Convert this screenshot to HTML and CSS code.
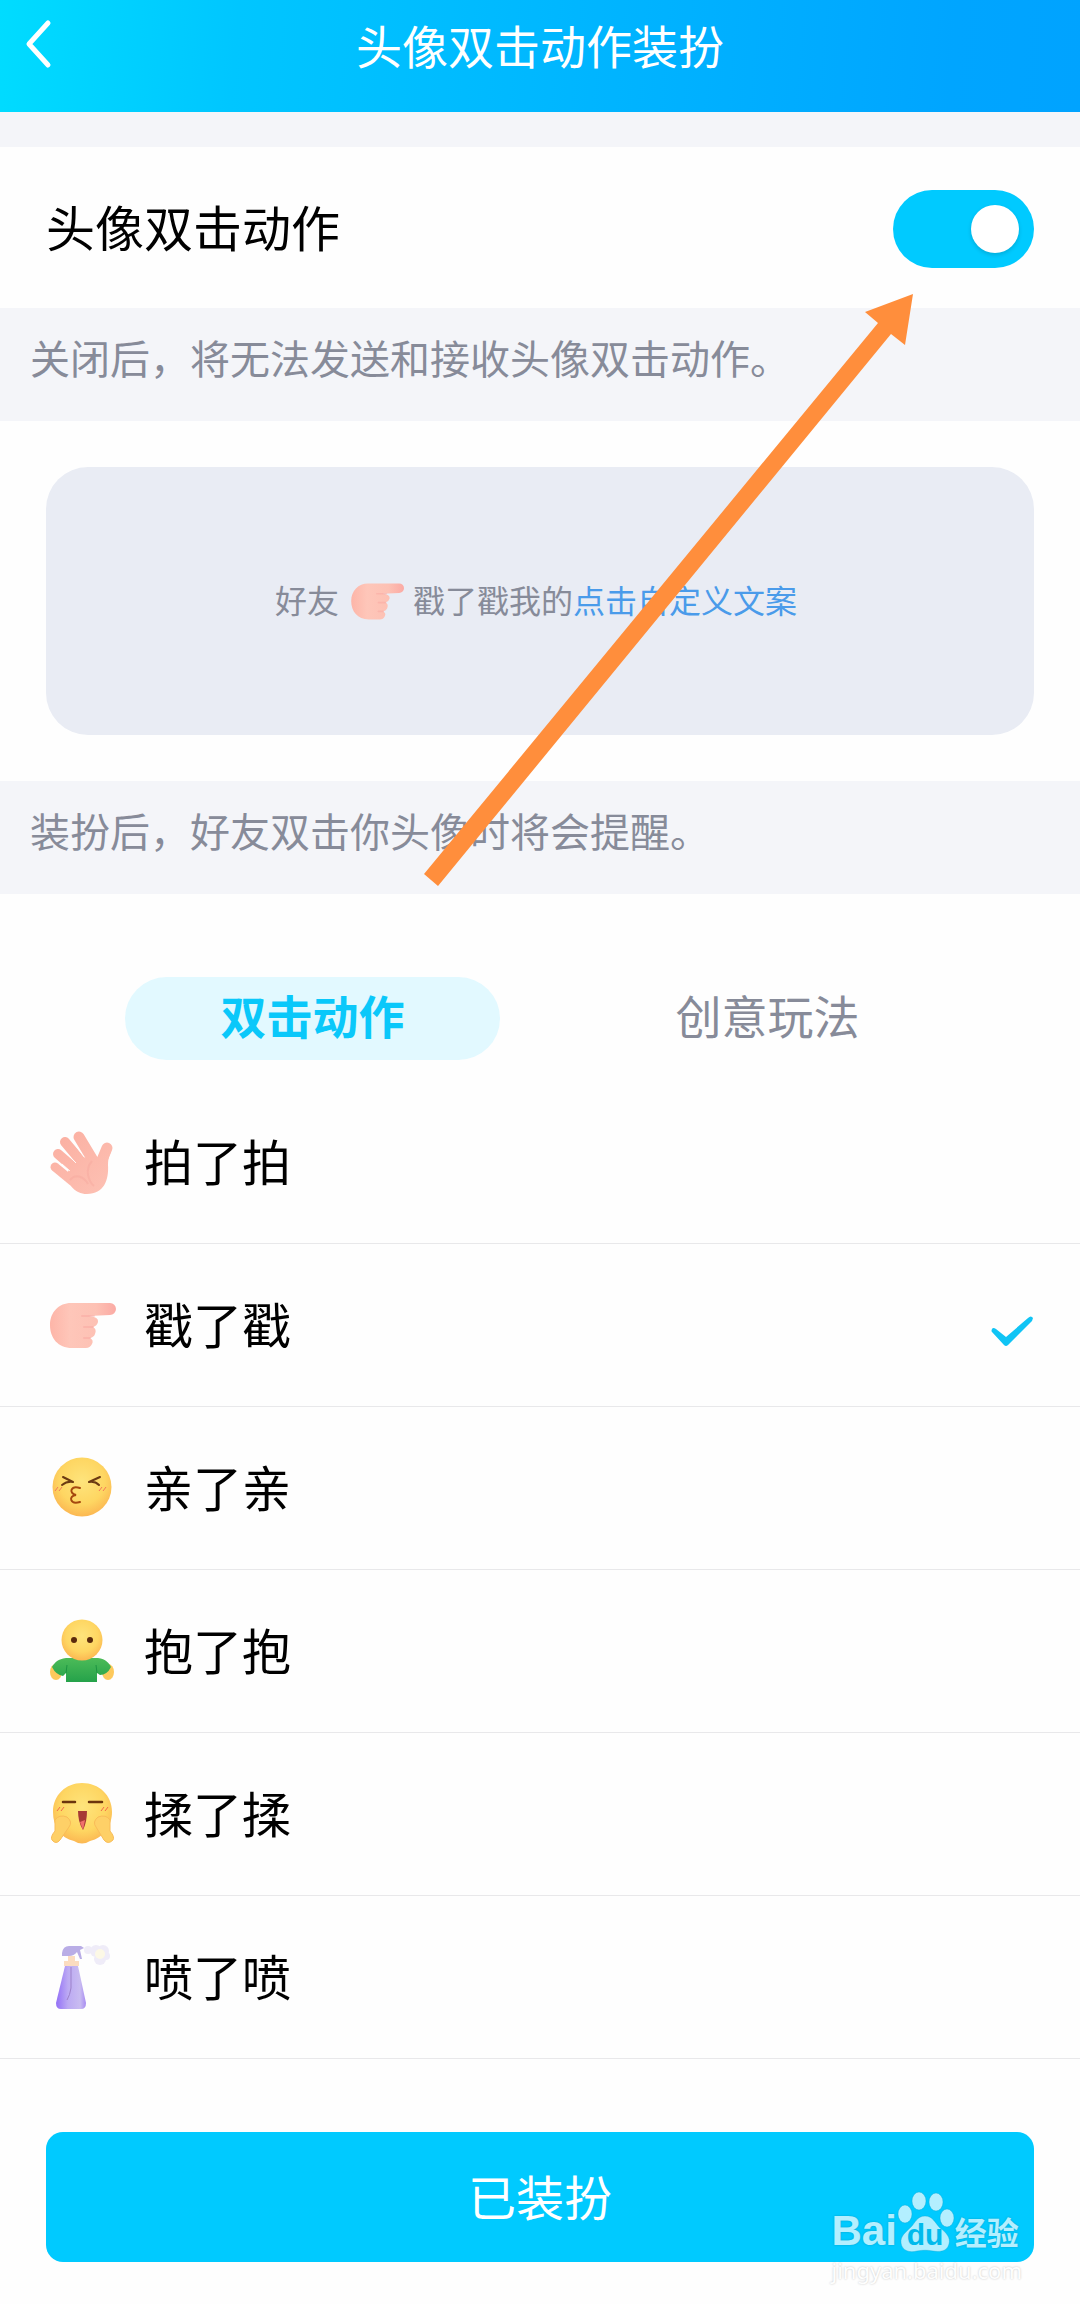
FILE: index.html
```html
<!DOCTYPE html>
<html lang="zh-CN">
<head>
    <meta charset="UTF-8">
    <meta name="viewport" content="width=device-width, initial-scale=1">
    <title>头像双击动作装扮</title>
    <link rel="stylesheet" href="styles.css">
</head>
<body>
    <svg class="defs" width="0" height="0" aria-hidden="true">
        <defs>
            <linearGradient id="skin" gradientUnits="userSpaceOnUse" x1="10" y1="10" x2="60" y2="65">
                <stop offset="0" stop-color="#fbb0a2"/>
                <stop offset="1" stop-color="#fdc0b3"/>
            </linearGradient>
            <linearGradient id="fist" x1="0" y1="0" x2="1" y2="0">
                <stop offset="0" stop-color="#fdb5a8"/>
                <stop offset="0.3" stop-color="#fec6b9"/>
                <stop offset="0.7" stop-color="#fdc1b4"/>
                <stop offset="1" stop-color="#fbaaa4"/>
            </linearGradient>
            <radialGradient id="face" cx="0.5" cy="0.4" r="0.65">
                <stop offset="0" stop-color="#fee47c"/>
                <stop offset="0.6" stop-color="#fed662"/>
                <stop offset="1" stop-color="#fbb04e"/>
            </radialGradient>
            <linearGradient id="shirt" x1="0" y1="0" x2="0" y2="1">
                <stop offset="0" stop-color="#4cbb58"/>
                <stop offset="1" stop-color="#25a24a"/>
            </linearGradient>
            <linearGradient id="bottle" x1="0" y1="0" x2="1" y2="0">
                <stop offset="0" stop-color="#9370f7"/>
                <stop offset="0.4" stop-color="#bcaaf3"/>
                <stop offset="0.8" stop-color="#c9bcf1"/>
                <stop offset="1" stop-color="#a88cf2"/>
            </linearGradient>
            <symbol id="icon-poke" viewBox="0 0 70 70">
                <path d="M25 13H64A6 6 0 0 1 64 25L43 26Q53 27 52 32Q51 36 47 37Q51 39 49 44Q48 47 44 48Q48 50 46 54Q44 58 40 58H26C12 58 4 48 4 35C4 22 13 13 25 13Z" fill="url(#fist)"/>
                <path d="M36 26h12M38 37h9M38 48h6" fill="none" stroke="#f79c98" stroke-width="2" stroke-linecap="round" opacity="0.35"/>
            </symbol>
            <symbol id="icon-check" viewBox="0 0 44 44">
                <path d="M2 26Q3 24 6 26L16 34L38 15Q41 12 43 15L42 18L18 42Q16 44 14 42L2 29Q1 28 2 26Z"/>
            </symbol>
        </defs>
    </svg>

    <div class="page">
        <header class="header">
            <button class="btn-back" aria-label="返回">
                <svg viewBox="0 0 32 56"><path d="M28 7L9 28L28 49" fill="none" stroke="#fff" stroke-width="5" stroke-linecap="round" stroke-linejoin="round"/></svg>
            </button>
            <h1>头像双击动作装扮</h1>
        </header>

        <main>
            <div class="setting">
                <label for="ligado">头像双击动作</label>
                <input type="checkbox" class="switch" id="ligado" checked>
            </div>
            <p class="note">关闭后，将无法发送和接收头像双击动作。</p>

            <div class="preview">
                <div class="card">
                    <span>好友</span>
                    <svg class="icon-small"><use href="#icon-poke"/></svg>
                    <span>戳了戳我的</span><a href="#">点击自定义文案</a>
                </div>
            </div>
            <p class="note">装扮后，好友双击你头像时将会提醒。</p>

            <div class="tabs">
                <button class="tab active">双击动作</button>
                <button class="tab">创意玩法</button>
            </div>

            <div class="actions">
                <label class="action">
                    <svg class="icon" viewBox="0 0 70 70">
                        <g stroke="url(#skin)" stroke-linecap="round" fill="none">
                            <path d="M9 40L26 54" stroke-width="9"/>
                            <path d="M12 27L34 46" stroke-width="10"/>
                            <path d="M19 15L40 40" stroke-width="10"/>
                            <path d="M33 10L48 35" stroke-width="11"/>
                            <path d="M61 21L54 38" stroke-width="11"/>
                        </g>
                        <path d="M21 47C24 38 34 32 43 30L50 33L57 20L65 25C63 29 62 32 62 38C63 53 58 67 41 67C28 67 24 57 19 51Z" fill="url(#skin)"/>
                        <path d="M46 34C38 43 43 55 48 59M24 53C30 46 38 50 42 57" fill="none" stroke="#f6a59a" stroke-width="2" opacity="0.4"/>
                        <path d="M16 37l8 7M20 26l10 10M30 19l8 11" fill="none" stroke="#fff" stroke-width="1" opacity="0.8"/>
                    </svg>
                    <span>拍了拍</span>
                    <input type="radio" name="acao">
                    <svg class="check"><use href="#icon-check"/></svg>
                </label>
                <label class="action">
                    <svg class="icon"><use href="#icon-poke"/></svg>
                    <span>戳了戳</span>
                    <input type="radio" name="acao" checked>
                    <svg class="check"><use href="#icon-check"/></svg>
                </label>
                <label class="action">
                    <svg class="icon" viewBox="0 0 70 70">
                        <circle cx="36" cy="34" r="29.5" fill="url(#face)"/>
                        <path d="M17 24l10 5M27 29q-6-1-11 3M54 24l-11 5M43 29q6-1 10 3" fill="none" stroke="#6b3a12" stroke-width="2" stroke-linecap="round"/>
                        <path d="M34 35C25 32 22 40 30 42C22 43 24 52 34 49" fill="none" stroke="#a5480f" stroke-width="2" stroke-linecap="round"/>
                        <path d="M9 38l3-4M13 38l3-4M53 38l3-4M57 38l3-4" stroke="#f4785a" stroke-width="1"/>
                    </svg>
                    <span>亲了亲</span>
                    <input type="radio" name="acao">
                    <svg class="check"><use href="#icon-check"/></svg>
                </label>
                <label class="action">
                    <svg class="icon" viewBox="0 0 70 70">
                        <ellipse cx="10" cy="56" rx="6" ry="8" fill="#fdc95c"/>
                        <ellipse cx="62" cy="56" rx="6" ry="8" fill="#fdc95c"/>
                        <path d="M20 42H52C60 43 63 47 65 51Q61 59 54 59L51 57V66H20V57L17 60Q10 59 6 51C9 46 12 43 20 42Z" fill="url(#shirt)"/>
                        <path d="M20 57l1-8M51 57l-1-8" stroke="#1d9442" stroke-width="1" fill="none"/>
                        <circle cx="36" cy="24" r="20.5" fill="url(#face)"/>
                        <circle cx="28" cy="24" r="3" fill="#5a2a0c"/>
                        <circle cx="44" cy="24" r="3" fill="#5a2a0c"/>
                    </svg>
                    <span>抱了抱</span>
                    <input type="radio" name="acao">
                    <svg class="check"><use href="#icon-check"/></svg>
                </label>
                <label class="action">
                    <svg class="icon" viewBox="0 0 70 70">
                        <path d="M36 4C53 4 66 16 66 33C66 46 58 59 44 62Q36 67 28 62C14 59 7 47 7 33C7 16 20 4 36 4Z" fill="url(#face)"/>
                        <path d="M17 23h12M43 23h13" stroke="#6b350d" stroke-width="2.5" stroke-linecap="round"/>
                        <path d="M32 32h9q0 11-4 19q-5-8-5-19Z" fill="#a73a35"/>
                        <path d="M34 43l5-2-2 10Z" fill="#f1706c"/>
                        <path d="M11 32l3-4M15 32l3-4M55 32l3-4M59 32l3-4" stroke="#f26a49" stroke-width="1"/>
                        <path d="M9 41Q13 35 21 38Q27 43 23 48L14 61Q10 66 6 61Q4 58 9 52ZM64 41Q60 35 52 38Q46 43 50 48L58 61Q62 66 67 61Q69 58 64 52Z" fill="#fed067" stroke="#f9bc58" stroke-width="1"/>
                    </svg>
                    <span>揉了揉</span>
                    <input type="radio" name="acao">
                    <svg class="check"><use href="#icon-check"/></svg>
                </label>
                <label class="action">
                    <svg class="icon" viewBox="0 0 70 70">
                        <g fill="#efecf8">
                            <circle cx="42" cy="8" r="4"/>
                            <circle cx="50" cy="9" r="6"/>
                            <circle cx="54" cy="17" r="6"/>
                            <circle cx="57" cy="9" r="6"/>
                            <circle cx="60" cy="14" r="4"/>
                        </g>
                        <circle cx="54" cy="12" r="5" fill="#fcf8e6"/>
                        <path d="M16 11Q17 4 23 4H35L38 6L34 8L36 17H34L31 10Q28 14 23 14H16Z" fill="#b9ade6"/>
                        <path d="M22 14h7v5h4v5H18v-5h4Z" fill="#fbdcc0"/>
                        <path d="M19 24h13L40 61Q40 67 35 67H15Q10 67 10 61Z" fill="url(#bottle)"/>
                        <path d="M25 25v21q-1 7-4 12" fill="none" stroke="#9c81c9" stroke-width="1"/>
                    </svg>
                    <span>喷了喷</span>
                    <input type="radio" name="acao">
                    <svg class="check"><use href="#icon-check"/></svg>
                </label>
            </div>
        </main>

        <footer class="footer">
            <button class="btn-apply">已装扮</button>
            <div class="watermark">
                <div class="brand">
                    <span class="brand-bai">Bai</span>
                    <svg class="paw" viewBox="0 0 58 62">
                        <g fill="#fff" stroke="#1a9cc4" stroke-opacity="0.4" stroke-width="1">
                            <ellipse cx="8" cy="23" rx="7" ry="9"/>
                            <ellipse cx="22" cy="10" rx="7" ry="9"/>
                            <ellipse cx="39" cy="11" rx="7" ry="9"/>
                            <ellipse cx="50" cy="27" rx="7" ry="9"/>
                            <path d="M28 25C36 25 38 32 43 37C49 41 54 47 52 53C50 61 42 61 36 60C30 59 26 59 20 60C13 62 5 60 4 52C3 45 9 41 14 36C18 32 20 25 28 25Z"/>
                        </g>
                        <text class="paw-text" x="28" y="54" text-anchor="middle">du</text>
                    </svg>
                    <span class="brand-cn">经验</span>
                </div>
                <div class="site">jingyan.baidu.com</div>
            </div>
        </footer>

        <svg class="arrow" viewBox="0 0 490 593" aria-hidden="true">
            <path d="M489 0L441 18L454 29L0 580L14 592L467 40L481 51Z" fill="#ff8e3c"/>
        </svg>
    </div>
</body>
</html>
```

FILE: styles.css
```css
* {
    box-sizing: border-box;
}

body {
    font-family: "Noto Sans CJK SC", sans-serif;
    margin: 0;
    background: #fefefe;
    color: #000;
}

h1, p {
    margin: 0;
}

button {
    font-family: inherit;
    border: none;
    padding: 0;
    cursor: pointer;
}

.defs {
    position: absolute;
}

.page {
    position: relative;
}

.header {
    display: grid;
    grid-template-columns: 120px 1fr 120px;
    align-items: center;
    height: 112px;
    padding-bottom: 24px;
    background: linear-gradient(95deg, #00dcff 0%, #00c6ff 22%, #00b5ff 55%, #00a5ff 88%, #00a3ff 100%);
}

.header h1 {
    color: white;
    font-size: 46px;
    line-height: 60px;
    font-weight: normal;
    text-align: center;
}

.btn-back {
    display: flex;
    padding-left: 20px;
    background: none;
}

.btn-back svg {
    width: 32px;
    height: 56px;
}

main {
    border-top: 35px solid #f4f5f9;
}

.setting {
    display: flex;
    justify-content: space-between;
    align-items: center;
    height: 161px;
    padding: 2px 46px 0;
    font-size: 49px;
}

.setting label,
.action span {
    padding-bottom: 6px;
}

.switch {
    appearance: none;
    width: 141px;
    height: 78px;
    margin: 0;
    padding: 15px;
    border-radius: 39px;
    background: #ccc;
    cursor: pointer;
}

.switch::before {
    content: "";
    display: block;
    width: 48px;
    height: 48px;
    border-radius: 50%;
    background: white;
    box-shadow: 0 2px 4px rgba(0,0,0,0.15);
}

.switch:checked {
    background: #00caff;
}

.switch:checked::before {
    margin-left: auto;
}

.note {
    padding: 19px 30px 34px;
    background: #f4f5f9;
    color: #878b99;
    font-size: 40px;
    line-height: 60px;
}

.preview {
    padding: 46px;
}

.card {
    display: flex;
    justify-content: center;
    align-items: center;
    height: 268px;
    padding-right: 8px;
    border-radius: 42px;
    background: #e9ecf4;
    color: #878b99;
    font-size: 32px;
}

.card span,
.card a {
    padding-bottom: 4px;
}

.card a {
    color: #4a9bea;
    text-decoration: none;
}

.icon-small {
    width: 56px;
    height: 56px;
    margin: 0 9px;
}

.tabs {
    display: flex;
    justify-content: center;
    gap: 80px;
    padding: 83px 0 21px;
}

.tab {
    width: 375px;
    height: 83px;
    padding-bottom: 8px;
    border-radius: 42px;
    background: none;
    color: #878b99;
    font-size: 46px;
    line-height: 75px;
}

.tab.active {
    background: #e2f9ff;
    color: #0ac8fa;
    font-weight: bold;
}

.action {
    display: flex;
    align-items: center;
    height: 163px;
    padding: 0 46px;
    border-bottom: 1px solid #e8e8ea;
    font-size: 49px;
    cursor: pointer;
}

.action input {
    appearance: none;
    margin: 0 0 0 auto;
}

.icon {
    width: 70px;
    height: 70px;
    margin-right: 28px;
}

.check {
    display: none;
    width: 44px;
    height: 44px;
    fill: #10c4f5;
}

.action input:checked + .check {
    display: block;
}

.footer {
    position: relative;
    padding: 73px 46px 43px;
}

.btn-apply {
    display: block;
    width: 100%;
    height: 130px;
    padding-bottom: 4px;
    border-radius: 17px;
    background: #00caff;
    color: white;
    font-size: 48px;
}

/* marca d'água */
.watermark {
    position: absolute;
    right: 58px;
    bottom: 18px;
    color: white;
    text-shadow: 0 0 2px rgba(0,0,0,0.3);
}

.brand {
    display: flex;
    align-items: flex-end;
    opacity: 0.7;
}

.brand-bai {
    font: bold 42px/44px "Liberation Sans", Arial, sans-serif;
}

.brand-cn {
    font-size: 32px;
    line-height: 44px;
    font-weight: bold;
}

.paw {
    width: 58px;
    height: 62px;
}

.paw-text {
    font: bold 30px "Liberation Sans", Arial, sans-serif;
    fill: #00b4e4;
    text-shadow: none;
}

.site {
    font: 22px/34px "Noto Sans", sans-serif;
    opacity: 0.8;
}

.arrow {
    position: absolute;
    top: 294px;
    left: 424px;
    width: 490px;
    height: 593px;
    pointer-events: none;
}
```
